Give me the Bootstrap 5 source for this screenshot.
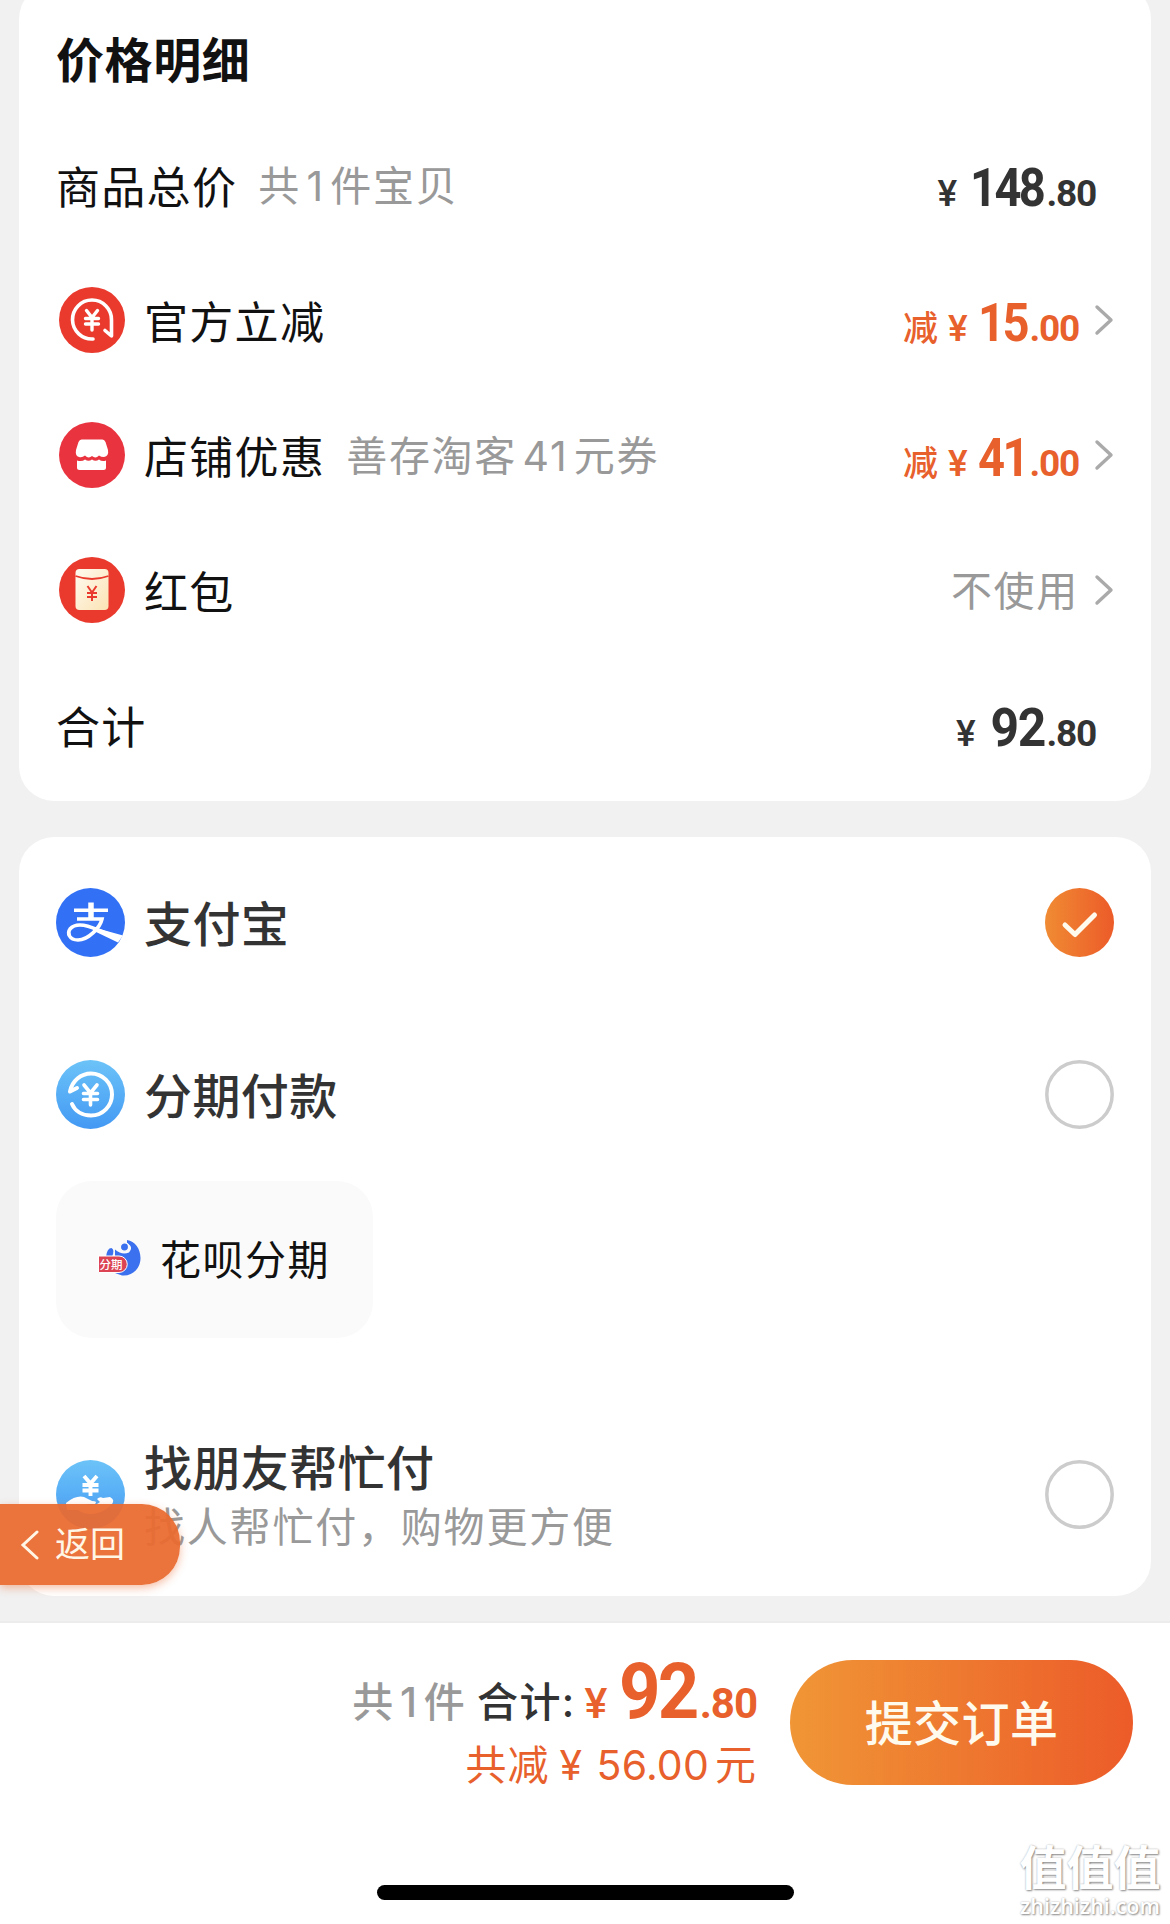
<!DOCTYPE html>
<html lang="zh-CN">
<head>
<meta charset="utf-8">
<meta name="viewport" content="width=device-width, initial-scale=1">
<title>确认订单</title>
<link href="https://cdn.jsdelivr.net/npm/bootstrap@5.3.0/dist/css/bootstrap.min.css" rel="stylesheet">
<style>
body{background:#f1f1f1;font-family:Inter,"Noto Sans CJK SC",sans-serif;color:#111;line-height:1;}
.page{width:1170px;height:1924px;overflow:hidden;}
.panel{margin:0 19px;background:#fff;border-radius:35px;}
.panel-price{margin-top:-16px;height:817px;padding:45px 37px 0 37px;}
.panel-pay{margin-top:36px;height:759px;padding:0 37px;}
.panel-title{font-size:48px;line-height:64px;letter-spacing:.6px;font-weight:700;margin:0;}
.fee-list{margin-top:27px;}
.fee-row{height:135px;}
.fee-ico{width:66px;height:66px;margin:-5px 19px 0 3px;flex:none;}
.fee-name{font-size:44px;letter-spacing:1.3px;line-height:60px;}
.fee-note{font-size:41px;letter-spacing:1.7px;color:#999;line-height:60px;margin:-3px 0 0 21px;}
.num-gap{margin:0 5.500px;}
.amount{font-family:Roboto,"Noto Sans CJK SC",sans-serif;font-weight:700;color:#333;line-height:60px;white-space:nowrap;}
.fee-row .amount{padding-top:13px;}
.amount .yen{font-size:37px;font-weight:500;}
.amount .big{display:inline-block;font-size:53px;letter-spacing:-1.5px;margin-left:11px;margin-right:2px;transform:scaleX(.94);transform-origin:right;}
.amount .big.tight{letter-spacing:-3px;transform:scaleX(.89);margin-left:4px;margin-right:3px;}
.amount .dec{font-size:37px;letter-spacing:-1.2px;}
.amount .cut{font-size:35px;margin-right:10px;font-weight:500;}
.amount.hot{color:#e8602c;}
.amount-end{margin-right:18px;}
.chev{width:20px;height:32px;margin:-5px 0 0 15px;flex:none;}
.pay-ico,.pay-radio{width:69px;height:69px;flex:none;}
.pay-ico{margin-right:19px;}
.pay-name{font-size:48px;letter-spacing:.4px;line-height:60px;font-weight:500;color:#333;padding-top:5px;}
.pay-note{font-size:41px;letter-spacing:1.8px;line-height:56px;color:#999;}
.row-a{height:172px;}
.row-top{height:171px;}
.row-friend{height:200px;margin-top:56px;}
.chip{width:317px;height:157px;border-radius:36px;background:#fafafa;margin-top:1px;padding-left:42px;font-size:41px;letter-spacing:1.5px;}
.chip svg{width:44px;height:38px;margin:-3px 18px 0 0;}
.chip span{padding-top:1px;}
.back{position:absolute;left:0;top:1504px;width:180px;height:81px;border-radius:0 38px 38px 0;background:rgba(234,106,48,.94);color:#fff6e6;font-size:35px;padding-left:20px;box-shadow:0 3px 8px rgba(236,113,58,.45);}
.back svg{margin-right:15px;}
.footer-bar{margin-top:25px;height:303px;background:#fff;border-top:2px solid #ececec;padding:37px 37px 0 0;}
.sum-line{line-height:60px;height:60px;padding-top:1px;}
.count-txt{font-size:41px;font-weight:500;color:#999;letter-spacing:1.3px;margin-right:11px;}
.total-txt{font-size:41px;font-weight:500;color:#333;letter-spacing:1.3px;}
.sum-line .amount{transform:translateY(1px);}
.sum-line .yen{font-size:43px;font-weight:500;margin-left:9px;}
.sum-line .big{font-size:77px;letter-spacing:-3px;margin-left:7px;margin-right:3px;}
.sum-line .dec{font-size:42px;letter-spacing:-1px;}
.save-line{font-size:41px;letter-spacing:1px;color:#e8602c;line-height:60px;margin-top:15px;}
.save-line .yen-gap{margin-left:10px;margin-right:1px;}
.save-line .sum-gap{letter-spacing:.2px;margin-right:6px;}
.submit{width:343px;height:125px;border-radius:63px;border:0;margin-left:33px;background:linear-gradient(90deg,#f09636,#ec5b29);color:#fffaee;font-size:48px;letter-spacing:.4px;font-weight:500;padding-top:4px;}
.home-bar{position:absolute;left:377px;top:1885px;width:417px;height:15px;border-radius:8px;background:#000;}
.stamp{position:absolute;left:1017px;top:1841px;width:146px;color:#fff;text-shadow:1px 1px 2px #8a8a8a,0 0 2px #bbb;text-align:center;white-space:nowrap;}
.stamp-a{font-size:47px;line-height:54px;font-weight:700;}
.stamp-b{font-family:"Open Sans",sans-serif;font-size:21.500px;line-height:22px;font-weight:600;}
</style>
</head>
<body>
<div class="page position-relative">
<section class="panel panel-price">
  <h1 class="panel-title">价格明细</h1>
  <div class="fee-list">
    <div class="fee-row d-flex align-items-center">
      <span class="fee-name">商品总价</span><span class="fee-note">共<span class="num-gap">1</span>件宝贝</span>
      <span class="amount amount-end ms-auto"><span class="yen">¥</span><span class="big tight">148</span><span class="dec">.80</span></span>
    </div>
    <div class="fee-row d-flex align-items-center">
      <svg class="fee-ico" viewBox="0 0 66 66"><circle cx="33" cy="33" r="33" fill="#ea3a2e"/><path d="M34 52A19.500 19.500 0 1 1 52.500 33V49L46 43.500" fill="none" stroke="#fff" stroke-width="3.6" stroke-linecap="round" stroke-linejoin="round"/><path d="M27.500 23.500L33 30.500L38.500 23.500M33 30.500V43M26.500 31.500H39.500M26.500 37H39.500" fill="none" stroke="#fff" stroke-width="3.400" stroke-linecap="round"/></svg>
      <span class="fee-name">官方立减</span>
      <span class="amount hot ms-auto"><span class="cut">减</span><span class="yen">¥</span><span class="big tight">15</span><span class="dec">.00</span></span>
      <svg class="chev" viewBox="0 0 20 32"><path d="M3 3L17 16L3 29" fill="none" stroke="#aaa" stroke-width="3.4" stroke-linecap="round" stroke-linejoin="round"/></svg>
    </div>
    <div class="fee-row d-flex align-items-center">
      <svg class="fee-ico" viewBox="0 0 66 66"><circle cx="33" cy="33" r="33" fill="#e93440"/><path d="M22.500 17.500H43.500Q45.500 17.500 46.500 20L49 28Q50 34 45 35Q42 35 40 33.500Q36.500 37 33 34Q29.500 37 26 33.500Q23 36 20 35Q16 34 17 28L19.500 20Q20.500 17.500 22.500 17.500Z" fill="#fff"/><path d="M18 38.500Q23 40 26 37.500Q29.500 40 33 37.500Q36.500 40 40 37.500Q43 40 47 38.500V45.500Q47 48 44.500 48H20.500Q18 48 18 45.500Z" fill="#fff"/></svg>
      <span class="fee-name">店铺优惠</span><span class="fee-note">善存淘客<span class="num-gap">41</span>元券</span>
      <span class="amount hot ms-auto"><span class="cut">减</span><span class="yen">¥</span><span class="big tight">41</span><span class="dec">.00</span></span>
      <svg class="chev" viewBox="0 0 20 32"><path d="M3 3L17 16L3 29" fill="none" stroke="#aaa" stroke-width="3.4" stroke-linecap="round" stroke-linejoin="round"/></svg>
    </div>
    <div class="fee-row d-flex align-items-center">
      <svg class="fee-ico" viewBox="0 0 66 66"><defs><linearGradient id="env" x1="0" y1="0" x2="1" y2="1"><stop offset="0" stop-color="#fffaf0"/><stop offset="1" stop-color="#fbe3b4"/></linearGradient></defs><circle cx="33" cy="33" r="33" fill="#ea3a2e"/><rect x="16.500" y="12" width="33" height="41" rx="4" fill="url(#env)"/><path d="M16.500 19Q33 25 49.500 19" fill="none" stroke="#ea3a2e" stroke-width="1.800"/><path d="M28.500 29L33 35.500L37.500 29M33 35.500V44M28 36H38M28 40H38" fill="none" stroke="#ea3a2e" stroke-width="2"/></svg>
      <span class="fee-name">红包</span>
      <span class="fee-note ms-auto">不使用</span>
      <svg class="chev" viewBox="0 0 20 32"><path d="M3 3L17 16L3 29" fill="none" stroke="#aaa" stroke-width="3.4" stroke-linecap="round" stroke-linejoin="round"/></svg>
    </div>
    <div class="fee-row d-flex align-items-center">
      <span class="fee-name">合计</span>
      <span class="amount amount-end ms-auto"><span class="yen">¥</span><span class="big">92</span><span class="dec">.80</span></span>
    </div>
  </div>
</section>

<section class="panel panel-pay">
  <div class="row-top d-flex align-items-center">
    <svg class="pay-ico" viewBox="0 0 69 69"><circle cx="34.500" cy="34.500" r="34.500" fill="#3271f6"/><path d="M18 22.300H52M21 31H46C44 40 32 52 22 52C13 52 11 45 14 41C20 34 31 37 42 42L62 50" fill="none" stroke="#fff" stroke-width="3.600"/><path d="M35 14.500V31" stroke="#fff" stroke-width="5.500"/><path d="M40 40L67 47.500L62 54.500L38 43Z" fill="#fff"/></svg>
    <span class="pay-name">支付宝</span>
    <svg class="pay-radio ms-auto" viewBox="0 0 69 69"><defs><linearGradient id="tick"><stop offset="0" stop-color="#f08b33"/><stop offset="1" stop-color="#ec5b29"/></linearGradient></defs><circle cx="34.500" cy="34.500" r="34.500" fill="url(#tick)"/><path d="M20 37L30 46.500L49.500 27" fill="none" stroke="#fffaee" stroke-width="5" stroke-linecap="round" stroke-linejoin="round"/></svg>
  </div>
  <div class="row-a d-flex align-items-center">
    <svg class="pay-ico" viewBox="0 0 69 69"><defs><linearGradient id="sky" x1="0" y1="0" x2="0" y2="1"><stop offset="0" stop-color="#6cc3f8"/><stop offset="1" stop-color="#4399f3"/></linearGradient></defs><circle cx="34.500" cy="34.500" r="34.500" fill="url(#sky)"/><path d="M21 28L14 31.500C16 21 25 13.500 35 13.500A21 21 0 0 1 35 55.500C26 55.500 19 51 16 44" fill="none" stroke="#fff" stroke-width="4" stroke-linecap="round" stroke-linejoin="round"/><path d="M28 25L34.500 33L41 25M34.500 33V45M27.500 33.500H41.500M27.500 39.500H41.500" fill="none" stroke="#fff" stroke-width="3.600" stroke-linecap="round"/></svg>
    <span class="pay-name">分期付款</span>
    <svg class="pay-radio ms-auto" viewBox="0 0 69 69"><circle cx="34.500" cy="34.500" r="32.700" fill="#fff" stroke="#ccc" stroke-width="3.500"/></svg>
  </div>
  <div class="chip d-flex align-items-center">
    <svg viewBox="0 0 44 38"><path d="M29 1C37 2 42.500 10 42.500 19C42.500 30 34 37.500 24 36.500L17 34V18L17 10.500Q24 16.500 31 13.500Q36 8 29 4Z" fill="#3b71ee"/><circle cx="26.500" cy="8" r="4.200" fill="#3b71ee" stroke="#fafafa" stroke-width="1.500"/><path d="M8 18Q9 9 13.500 9Q17 10.500 14 18Z" fill="#3b71ee"/><path d="M.5 17H21A8 8 0 0 1 21 33.500H.5Z" fill="#dc4454" stroke="#fff" stroke-width="1"/><text x="1.500" y="29.700" font-size="11.500" font-weight="500" fill="#fff" letter-spacing="0">分期</text></svg>
    <span>花呗分期</span>
  </div>
  <div class="row-friend d-flex align-items-center">
    <svg class="pay-ico" viewBox="0 0 69 69"><circle cx="34.500" cy="34.500" r="34.500" fill="url(#sky)"/><path d="M28 16L34.500 23.500L41 16M34.500 23.500V36M26.500 25H42.500M26.500 30.500H42.500" fill="none" stroke="#fff" stroke-width="3.900"/><path d="M10 43Q20 35 28 37L36 41Q42 41 39 44L30 44.500Q38 47 44 42L41 39Q44 36 47 38L54 37Q60 40 55 45Q49 51 42 53Q30 56 22 50L11 50Z" fill="#fff"/></svg>
    <div class="d-flex flex-column"><span class="pay-name">找朋友帮忙付</span><span class="pay-note">找人帮忙付，购物更方便</span></div>
    <svg class="pay-radio ms-auto" viewBox="0 0 69 69"><circle cx="34.500" cy="34.500" r="32.700" fill="#fff" stroke="#ccc" stroke-width="3.500"/></svg>
  </div>
</section>

<footer class="footer-bar d-flex align-items-start justify-content-end">
  <div class="text-end">
    <div class="sum-line d-flex align-items-baseline justify-content-end"><span class="count-txt">共<span class="num-gap">1</span>件</span><span class="total-txt">合计:</span><span class="amount hot"><span class="yen">¥</span><span class="big">92</span><span class="dec">.80</span></span></div>
    <div class="save-line">共减<span class="yen-gap">¥</span> <span class="sum-gap">56.00</span>元</div>
  </div>
  <button type="button" class="submit">提交订单</button>
</footer>

<a class="back d-flex align-items-center text-decoration-none"><svg width="20" height="30" viewBox="0 0 20 30"><path d="M17 2L3 15L17 28" fill="none" stroke="#fff6e6" stroke-width="3" stroke-linecap="round"/></svg>返回</a>
<div class="home-bar"></div>
<div class="stamp"><div class="stamp-a">值值值</div><div class="stamp-b">zhizhizhi.com</div></div>
</div>
<script src="https://cdn.jsdelivr.net/npm/bootstrap@5.3.0/dist/js/bootstrap.bundle.min.js"></script>
</body>
</html>
